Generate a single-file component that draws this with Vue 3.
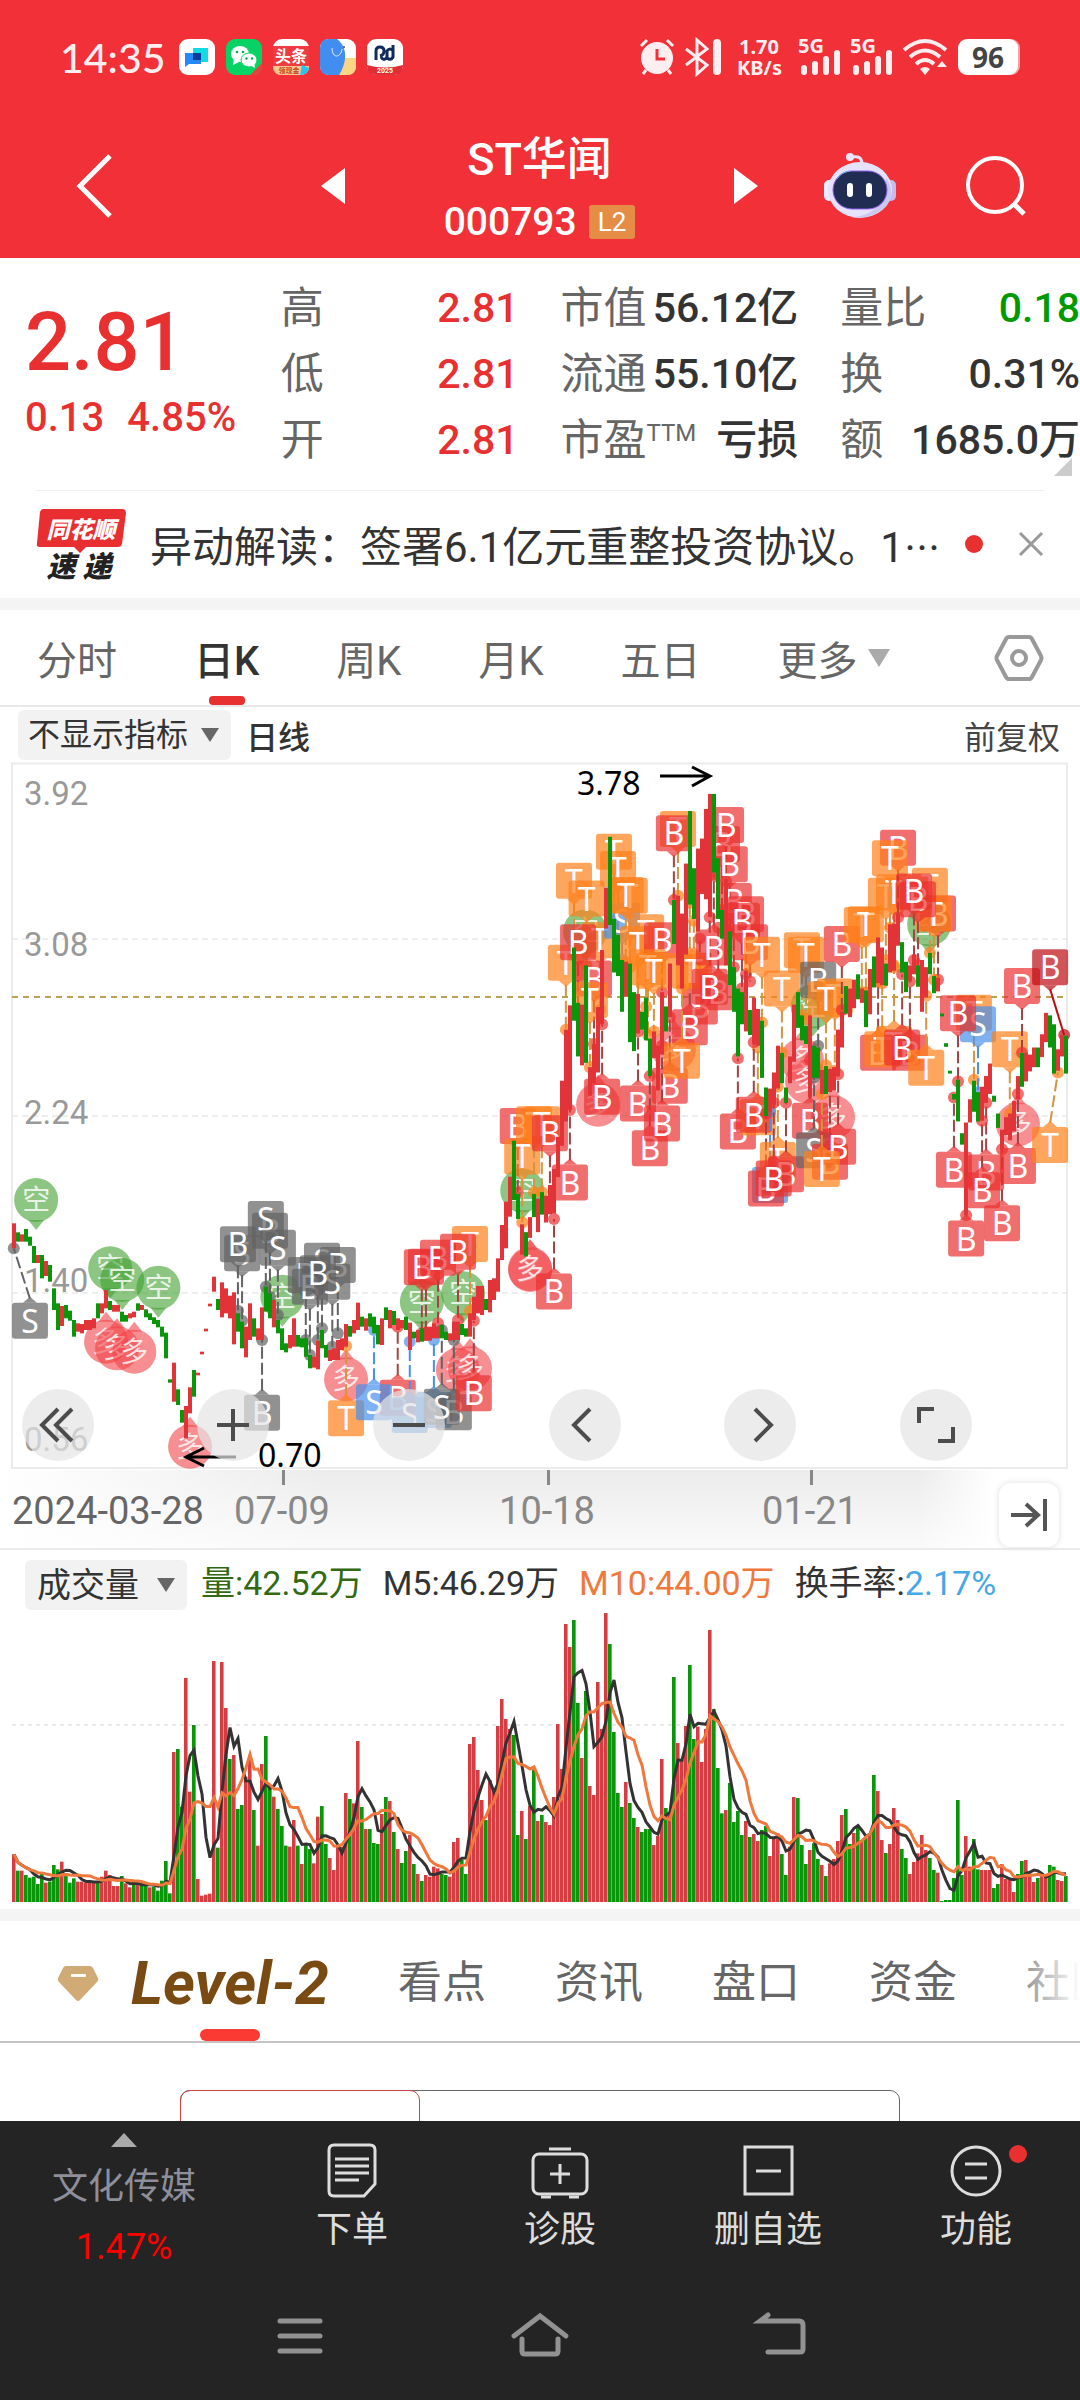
<script setup>
import { ref } from 'vue'

const quotes = [
    [
        { label: '高', value: '2.81', tone: 'up' },
        { label: '低', value: '2.81', tone: 'up' },
        { label: '开', value: '2.81', tone: 'up' }
    ],
    [
        { label: '市值', value: '56.12亿' },
        { label: '流通', value: '55.10亿' },
        { label: '市盈', sup: 'TTM', value: '亏损' }
    ],
    [
        { label: '量比', value: '0.18', tone: 'down' },
        { label: '换', value: '0.31%' },
        { label: '额', value: '1685.0万' }
    ]
]

const periods = ['分时', '日K', '周K', '月K', '五日']
const period = ref('日K')
const sections = ['看点', '资讯', '盘口', '资金', '社区']

// top-bottom of every candle, g marks a falling day
const firstHalf = `370-445 397-425g 403-425 387-425g 410-437g 438-489g 465-489 465-535g 483-528 495-545g
565-630g 610-690g 618-678 615-655g 632-662g 660-710g 670-695 672-700 660-690 660-690
655-685 610-655g 610-640 570-625 603-630g 615-635 615-635 635-665g 645-665g 640-655
635-652 610-632g 615-630 628-652g 640-660g 652-672g 660-682g 680-710g 698-775g 838-848g
788-905 868-915g 930-968g 918-1015 862-940 810-890g 818-826 755-763 686-694 611-619
530-575 597-630g 547-652 565-640 587-655 577-733 640-695g 665-745g 680-772 610-720
655-710g 685-720 622-720 560-635g 580-655g 600-682 660-700g 685-750g 730-757g 705-745
655-740 705-740g 715-742g 715-770g 765-805g 770-803 722-808 690-745g 735-773g 750-783
745-780 720-780 715-750 672-740 678-710g 660-700 608-690 650-680g 655-692 640-680g
650-700g 675-733g 655-735 622-660g 630-685 633-675g 655-690 660-685 650-690g 668-750
695-715g 690-727 685-725g 680-722 680-722 670-715 680-715 675-715g 695-720g 700-722
665-720 665-720 672-705g 685-710g 640-710 590-660 558-640 558-645 597-630g 540-637
535-600 475-575 375-480 305-445 230-350 122-300g`

const secondHalf = `1215-1285g 1300-1385 1322-1390g 1280-1338 1215-1280g 1228-1322 1210-1273g 1220-1295
1190-1272 1145-1270 1055-1168 898-1080 755-1012 687-980 525-730g 680-830g 685-855 575-848g
860-940 795-905 692-875 532-740 357-472 215-462g 445-595g 490-605g 560-705g 565-663
570-790g 650-815g 655-765 705-755g 665-785g 780-885g 760-835 800-925 650-825 690-760g
570-720 392-515g 380-575 430-640 290-545 143-405g 303-445g 248-480 220-375 137-390
95-440 95-315g 275-445g 420-500g 335-575 480-630g 580-705g 640-830g 650-740g 590-760
700-770g 665-795 697-800 730-890g 917-997g 920-985 875-965 800-920 820-905g 917-960g
830-905 685-845 650-750g 715-785g 745-795g 715-945 800-890g 805-890g 868-935 857-935g
865-930 860-925 755-885 705-805 633-710g 640-720 615-695 600-670g 640-680 645-748g
585-712 550-637g 497-625 525-630 570-632g 460-595 458-590 430-520 510-595g 565-650g
575-620 545-600 575-635g 560-705 580-665 540-600g 605-653g 610-648 710-718g 793-803g
870-878g 935-950g 895-1012g 1045-1077g 1015-1275 950-1015 898-985g 930-1012g 915-1010 885-960
850-935 940-957g 990-1030g 1035-1090 1000-1050 990-1065 955-1040 885-950 820-915g 820-900
825-872 805-860 805-860g 768-832 708-790 715-805g 740-878g 810-870 770-830 772-878g`

// the two halves are recorded at different resolutions
const early = { x: v => v / 2.904, y: v => 340 + v / 3 }
const late = { x: v => 500 + v / 2.703, y: v => v / 2.8 }

const readCandles = (text, scale, start) =>
    text.split(/\s+/).map((item, i) => {
        const [top, bottom] = item.split('-').map(v => scale.y(parseInt(v)))
        return { x: 12 + (start + i) * 4, y: top, height: bottom - top, fall: item.endsWith('g') }
    })

const candles = [
    ...readCandles(firstHalf, early, 0),
    ...readCandles(secondHalf, late, 126)
]

// kind letter x y anchorY [anchorX]
const earlyTags = `green 空 105 300|green 空 320 505|green 空 355 540|green 空 460 563|green 空 820 590
green 空 1225 605|green 空 1345 580|rose 多 308 725|rose 多 340 745|rose 多 390 755|rose 多 552 1040
rose 多 1005 838|rose 多 1330 810|rose 多 1365 805|rose 多 1540 510
gray S 87 662 445 40|gray S 703 460 662|gray B 691 433 632|gray B 784 392 590|gray S 772 357 560
gray S 807 443 645|gray B 761 938 720|gray S 935 482 685|gray B 888 525 720|gray B 900 560 765
gray B 981 495 700|gray S 965 545 740|gray B 923 520 720
orange T 1365 432 632|red B 1237 500 705|red B 1225 502 700|red B 1272 473 670|red B 1330 455 660
orange T 1005 955 738|red B 1155 893 680|blue S 1086 907 690|blue S 1190 945 725|blue S 1260 930 720
gray B 1318 937 720|gray S 1283 920 690|red B 1376 880 662`

const lateTags = `green 空 60 1205|green 空 230 480|green 空 845 690|green 空 1160 460
rose 多 81 1425|rose 多 265 965|rose 多 470 810|rose 多 816 840|rose 多 830 900|rose 多 900 1000|rose 多 1400 1020
red B 48 1025 1210|orange T 60 1110 1295|orange T 92 1020 1210|orange T 113 1020 1210|red B 135 1045 1240
red B 146 1488 1285|red B 189 1183 980|orange T 200 338 540|orange T 234 388 575|orange T 308 257 450
orange T 319 305 490|orange T 178 568 755|orange T 270 505 700|red B 211 510 700|red B 254 612 795
orange T 243 672 860|red B 276 943 740|blue S 330 450 560|orange T 351 380 580|orange T 340 378 565
orange T 395 482 690|orange T 373 515 715|red B 438 505 650|orange T 400 580 770|orange T 416 590 760
red B 373 962 760|red B 405 1087 885|red B 459 912 720|red B 438 1018 800|orange T 481 193 380
red B 470 205 392|red B 540 690 500|red B 513 748 560|orange T 492 842 640|orange T 513 590 400
orange T 524 590 450|red B 590 650 470|red B 567 635 440|red B 578 525 320|red B 600 235 420
red B 611 182 340|red B 621 292 480|red B 632 395 580|red B 665 432 600|red B 654 450 640|red B 676 510 620
red B 643 1040 835|orange T 697 1000 805|red B 686 993 790|orange T 708 545 735|orange T 762 640 820
orange T 816 533 715|orange T 827 545 725|blue S 730 1190 985|red B 719 1200 990|orange T 751 1120 915
red B 773 1160 960|red B 740 1172 960|gray B 860 615 800|orange T 905 662 870|orange T 881 670 855
red B 838 1010 840|gray S 849 1093 890|red B 892 1125 890|red B 914 1083 880|orange T 870 1145 935
red B 924 515 700|orange T 978 462 650|orange T 989 460 650|orange T 1043 380 560|orange T 1065 370 575
red B 1076 246 440|orange T 1054 275 470|orange T 1162 352 540|red B 1184 430 615|orange T 1173 430 615
red B 1130 390 575|red B 1119 368 560|red B 1022 820 620|orange T 1033 810 625|orange T 1065 795 580
red B 1108 820 620|red B 1087 805 600|orange T 1152 862 660|orange T 1281 708 895|blue S 1292 740 930
red B 1238 709 900|red B 1227 1147 945|red B 1260 1340 1275|red B 1314 1155 960|red B 1303 1205 1010
red B 1357 1297 1090|red B 1400 1137 935|orange T 1378 810 990|red B 1411 633 820
crimson B 1487 580 770 1525|orange T 1487 1078 875 1508`

const readTags = (text, scale) =>
    text.split(/[|\n]/).map(item => {
        const [kind, letter, x, y, anchorY, anchorX] = item.split(' ')
        const tag = { kind, letter, x: scale.x(+x), y: scale.y(+y), round: !anchorY }
        if (anchorY) {
            tag.anchorX = scale.x(+(anchorX || x))
            tag.anchorY = scale.y(+anchorY)
            tag.below = tag.anchorY < tag.y
        }
        return tag
    })

const tags = [...readTags(earlyTags, early), ...readTags(lateTags, late)]
const bubbles = tags.filter(tag => tag.round)
const trades = tags.filter(tag => !tag.round)

// bar tops counted from the top of the 905 unit high volume pane
const volumeText = `763 812g 812 825g 833g 830g 852g 822g 848 845g 795g 808g 785 820g 848g 835g 845 845 848 848
845 845g 830 812 825 858 858 828g 850 862 855g 855 850g 850g 862 860g 872g 842g 783g 880g
456 447g 620g 234 575 375g 837 887 884 881 183 743g 186 324 477g 465 627g 615g 530 480
630g 737 492 408g 560g 590 627g 678g 737g 740 660 737g 792 733g 747g 790 650 618g 732g 774
810 740 740 579 597g 610 423 621g 687 687g 729g 732g 642 591g 603 696g 747 789g 753g 705
792g 822 843g 825 830 800 805 822g 825g 830 726 714 780g 822g 432 411 510 600 660g 540
572 378 297 357 387 405g 705g 633 717g 618 510g 663 645g 666 675 591 372 507 72 141
60g 309g 474 273g 558 585 246 387 39 132g 396g 579g 621g 546 609g 654g 681 696g 687g 687g
735 708 477 624g 640 231g 429 480 378 195g 417g 380 486 387 90 327g 504g 640g 630 549g
666g 633g 705g 663 711g 702 723 690g 678g 768 710 700 762g 825g 740 591 594g 735g 792g 750
730g 777g 795 828g 790 777 723 645 627g 732g 699 680g 720 714g 700 525g 573 720 759g 732
624 660 747g 774g 822 786 760 705 750 774g 810g 818 903g 900g 900g 834g 600g 825g 708 800
717g 808g 810 810 810 864g 852g 792 837 840 876 822g 783g 780 820 846 834g 825 830 795g
800g 840 843 828g`

const volumes = volumeText.split(/\s+/).map((item, i) => ({
    x: 12 + i * 4,
    y: parseInt(item) / 3,
    fall: item.endsWith('g')
}))

const average = days =>
    volumes.map((bar, i) => {
        const slice = volumes.slice(Math.max(0, i - days + 1), i + 1)
        const mean = slice.reduce((sum, v) => sum + v.y, 0) / slice.length
        return `${bar.x + 2},${mean.toFixed(1)}`
    }).join(' ')

const ma5 = average(5)
const ma10 = average(10)
</script>

<template>
    <div class="page">
        <header class="header">
            <div class="status">
                <span class="clock">14:35</span>
                <svg class="app-icon" viewBox="0 0 36 36">
                    <rect width="36" height="36" rx="9" fill="#fff" />
                    <path d="M14 9h15v14H14z" fill="#13dbe4" />
                    <path d="M6 14h16v11H10l-4 3z" fill="#2787f5" />
                    <path d="M14 14h8v7h-8z" fill="#0a3d9a" />
                </svg>
                <svg class="app-icon" viewBox="0 0 36 36">
                    <rect width="36" height="36" rx="9" fill="#07d365" />
                    <path d="M36 24v3q0 9-9 9h-3z" fill="#e5443c" />
                    <ellipse cx="14" cy="15" rx="9" ry="8" fill="#fff" />
                    <path d="M8 20l-1 6 6-3z" fill="#fff" />
                    <ellipse cx="23" cy="21" rx="8" ry="7" fill="#fff" stroke="#07d365" />
                    <path d="M24 26l5 3-1-6z" fill="#fff" />
                    <g fill="#07a850">
                        <circle cx="11" cy="13" r="1.300" /><circle cx="17" cy="13" r="1.300" />
                        <circle cx="20.500" cy="19.500" r="1.200" /><circle cx="26" cy="19.500" r="1.200" />
                    </g>
                </svg>
                <svg class="app-icon" viewBox="0 0 36 36">
                    <rect width="36" height="36" rx="9" fill="#fff" />
                    <path d="M0 7h36v20H0z" fill="#ef3b3f" />
                    <path d="M0 27h36q0 9-9 9H9q-9 0-9-9z" fill="#fbc98e" />
                    <text x="18" y="23" class="icon-text" font-size="16" fill="#fff">头条</text>
                    <text x="16" y="34" class="icon-text" font-size="7" fill="#c34422">领现金</text>
                    <path d="M29 26l7 3q-1 7-9 7z" fill="#2ac2f0" />
                </svg>
                <svg class="app-icon" viewBox="0 0 36 36">
                    <rect width="36" height="36" rx="9" fill="#fff" />
                    <path d="M20 19h16v8q0 9-9 9H16z" fill="#f9d584" />
                    <path d="M9 0h8c12 9 9 25 2 36H9q-9 0-9-9V9q0-9 9-9z" fill="#428ef0" />
                    <path d="M12 9c0 11 9 10 10 1" fill="none" stroke="#e7f1ff" />
                    <circle cx="24" cy="8" r="1" fill="#555" />
                </svg>
                <svg class="app-icon" viewBox="0 0 36 36">
                    <rect width="36" height="36" rx="9" fill="#fff" />
                    <path d="M0 26q18 5 36 0v1q0 9-9 9H9q-9 0-9-9z" fill="#e12e35" />
                    <path d="M9 21v-9q0-4 4-4t4 4-4 5M14 18q3 5 6 0v-6q3-4 6 0m0-6v12q-2 4-6 1" fill="none" stroke="#102a5e" stroke-width="3" />
                    <text x="18" y="34" class="icon-text" font-size="7" fill="#fff">2025</text>
                </svg>
                <span class="spacer"></span>
                <svg class="sys" width="36" height="38" viewBox="0 0 36 38">
                    <circle cx="18" cy="20" r="16" fill="#ffeef0" />
                    <path d="M2 8l6-6M34 8l-6-6M7 32l-3 4M29 32l3 4" stroke="#ffeef0" stroke-width="3" />
                    <path d="M18 11v10h8" fill="none" stroke="#f13039" stroke-width="3" />
                </svg>
                <svg class="sys" width="36" height="38" viewBox="0 0 36 38">
                    <path d="M1 11l21 16-10 9V2l10 9L1 27" fill="none" stroke="#ffeef0" stroke-width="3" />
                    <path d="M32 5v28" stroke="#ffeef0" stroke-width="8" stroke-linecap="round" />
                </svg>
                <span class="speed">1.70<br>KB/s</span>
                <svg v-for="n in 2" :key="n" class="sys" width="42" height="38" viewBox="0 0 42 38">
                    <text x="0" y="15" class="sys-text">5G</text>
                    <path d="M6 30v4M17 26v8M28 21v13M39 15v19" stroke="#ffeef0" stroke-width="6" stroke-linecap="round" />
                </svg>
                <svg class="sys" width="46" height="38" viewBox="0 0 46 38">
                    <path d="M2 12Q23-6 44 12M8 19q15-13 30 0M14 26q9-8 18 0" fill="none" stroke="#ffeef0" stroke-width="4" />
                    <path d="M18 31q5-4 10 0l-5 6zM35 29h10l-5-6z" fill="#ffeef0" />
                </svg>
                <span class="battery">96</span>
            </div>
            <div class="nav">
                <button class="plain back" aria-label="返回">
                    <svg width="40" height="66" viewBox="0 0 40 66"><path d="M35 3L5 33l30 30" fill="none" stroke="#fff" stroke-width="5" /></svg>
                </button>
                <button class="plain" aria-label="上一只">
                    <svg width="24" height="36" viewBox="0 0 24 36"><path d="M24 0v36L0 18z" fill="#fff" /></svg>
                </button>
                <div class="stock">
                    <h1>ST华闻</h1>
                    <p>000793 <span>L2</span></p>
                </div>
                <button class="plain" aria-label="下一只">
                    <svg width="24" height="36" viewBox="0 0 24 36"><path d="M0 0v36l24-18z" fill="#fff" /></svg>
                </button>
                <button class="plain robot" aria-label="问财">
                    <svg width="72" height="68" viewBox="0 0 72 68">
                        <path d="M28 5q10-2 10 7" fill="none" stroke="#e6e0fa" stroke-width="3" />
                        <circle cx="26" cy="5" r="4" fill="#ece6fb" />
                        <rect x="0" y="28" width="10" height="21" rx="5" fill="#eceafc" />
                        <rect x="62" y="28" width="10" height="21" rx="5" fill="#c5bcec" />
                        <ellipse cx="36" cy="38" rx="32" ry="28" fill="#e6e2fb" />
                        <path d="M62 25q14 23-9 36Q42 67 27 65q23 0 32-20z" fill="#ccc7f1" />
                        <rect x="9" y="19" width="54" height="38" rx="19" fill="#202c52" stroke="#8b5ef0" stroke-width="1" />
                        <path d="M13 27q4-7 13-8" fill="none" stroke="#5ab6e6" />
                        <rect x="23" y="31" width="6" height="14" rx="3" fill="#fff" />
                        <rect x="42" y="31" width="6" height="14" rx="3" fill="#fff" />
                    </svg>
                </button>
                <button class="plain search" aria-label="搜索">
                    <svg width="60" height="60" viewBox="0 0 60 60">
                        <circle cx="29" cy="29" r="27" fill="none" stroke="#fff" stroke-width="4" />
                        <path d="M48 48l10 10" stroke="#fff" stroke-width="5" />
                    </svg>
                </button>
            </div>
        </header>

        <section class="quote">
            <div class="price">
                <strong>2.81</strong>
                <span>0.13</span><span>4.85%</span>
            </div>
            <dl v-for="(column, i) in quotes" :key="i">
                <div v-for="item in column" :key="item.label">
                    <dt>{{ item.label }}<sup v-if="item.sup">{{ item.sup }}</sup></dt>
                    <dd :class="item.tone">{{ item.value }}</dd>
                </div>
            </dl>
            <i class="corner"></i>
        </section>

        <section class="news">
            <svg width="92" height="74" viewBox="0 0 92 74">
                <path d="M7 2h79q4 0 4 4l-4 31q-1 3-4 3H50l-6 6-6-6H4q-4 0-3-4L4 5q1-3 3-3z" fill="#e92e31" />
                <text x="45" y="31" class="logo-text" font-size="23" fill="#fff">同花顺</text>
                <text x="43" y="70" class="logo-text" font-size="29" fill="#222">速 递</text>
            </svg>
            <a href="#">异动解读：签署6.1亿元重整投资协议。1<span>⋯</span></a>
            <i></i>
            <button class="plain" aria-label="关闭">
                <svg width="26" height="26" viewBox="0 0 26 26"><path d="M2 2l22 22M24 2L2 24" stroke="#999" stroke-width="3" /></svg>
            </button>
        </section>

        <nav class="periods">
            <button
                v-for="name in periods"
                :key="name"
                class="plain"
                :class="{ active: name === period }"
                @click="period = name"
            >{{ name }}</button>
            <button class="plain more">更多<svg width="24" height="18" viewBox="0 0 24 18"><path d="M1 0h22L12 18z" fill="#aaa" /></svg></button>
            <button class="plain setting" aria-label="设置">
                <svg width="50" height="46" viewBox="0 0 50 46">
                    <path d="M15 2h20q2 0 3 2l9 17q1 2 0 4l-9 17q-1 2-3 2H15q-2 0-3-2L3 25q-1-2 0-4l9-17q1-2 3-2z" fill="none" stroke="#999" stroke-width="4" />
                    <circle cx="25" cy="23" r="7" fill="none" stroke="#999" stroke-width="4" />
                </svg>
            </button>
        </nav>

        <div class="toolbar">
            <label class="picker">
                <select aria-label="指标"><option>不显示指标</option></select>
                <svg width="20" height="14" viewBox="0 0 20 14"><path d="M1 0h18l-9 14z" fill="#666" /></svg>
            </label>
            <strong>日线</strong>
            <span>前复权</span>
        </div>

        <section class="kline">
            <svg class="chart" viewBox="0 0 1080 710">
                <path d="M12 3.500H1067V708H12z" fill="none" stroke="#ebebeb" stroke-width="2" />
                <path d="M12 179H1067M12 356H1067M12 533H1067" stroke="#ddd" stroke-dasharray="6 4" />
                <path d="M12 237H1067" stroke="#bba055" stroke-width="2" stroke-dasharray="6 5" />
                <g class="scale">
                    <text x="24" y="45">3.92</text>
                    <text x="24" y="196">3.08</text>
                    <text x="24" y="364">2.24</text>
                    <text x="24" y="532">1.40</text>
                    <text x="24" y="691">0.56</text>
                </g>
                <g v-for="(tag, i) in bubbles" :key="'b' + i" :class="tag.kind" class="bubble">
                    <circle :cx="tag.x" :cy="tag.y" r="22" />
                    <path v-if="tag.kind === 'green'" :d="`M${tag.x - 8} ${tag.y + 20}h16l-8 10z`" />
                    <path v-else :d="`M${tag.x - 8} ${tag.y - 20}h16l-8 -10z`" />
                    <text :x="tag.x" :y="tag.y + 10">{{ tag.letter }}</text>
                </g>
                <g v-for="(tag, i) in trades" :key="'t' + i" :class="tag.kind" class="trade">
                    <line :x1="tag.x" :y1="tag.y + (tag.below ? -22 : 22)" :x2="tag.anchorX" :y2="tag.anchorY" />
                    <circle :cx="tag.anchorX" :cy="tag.anchorY" r="6" />
                    <path v-if="tag.below" :d="`M${tag.x - 7} ${tag.y - 18}h14l-7 -6z`" />
                    <path v-else :d="`M${tag.x - 7} ${tag.y + 18}h14l-7 6z`" />
                    <rect :x="tag.x - 18" :y="tag.y - 18" width="36" height="36" rx="3" />
                    <text :x="tag.x" :y="tag.y + 12">{{ tag.letter }}</text>
                </g>
                <rect
                    v-for="(bar, i) in candles"
                    :key="'c' + i"
                    :x="bar.x"
                    :y="bar.y"
                    width="4"
                    :height="bar.height"
                    :fill="bar.fall ? '#0a960a' : '#e23338'"
                />
                <g fill="none" stroke="#000" stroke-width="3">
                    <path d="M660 16h50M692 7l18 9-18 10" />
                    <path d="M236 697h-50M204 688l-18 9 18 9" />
                </g>
                <g class="extreme">
                    <text x="577" y="35">3.78</text>
                    <text x="258" y="707">0.70</text>
                </g>
            </svg>
            <div class="controls">
                <button aria-label="最早"><svg viewBox="0 0 72 72"><path d="M36 20L20 36l16 16M50 20L34 36l16 16" /></svg></button>
                <button aria-label="放大"><svg viewBox="0 0 72 72"><path d="M36 20v32M20 36h32" /></svg></button>
                <button aria-label="缩小"><svg viewBox="0 0 72 72"><path d="M20 36h32" /></svg></button>
                <button aria-label="左移"><svg viewBox="0 0 72 72"><path d="M41 20L25 36l16 16" /></svg></button>
                <button aria-label="右移"><svg viewBox="0 0 72 72"><path d="M31 20l16 16-16 16" /></svg></button>
                <button aria-label="全屏"><svg viewBox="0 0 72 72"><path d="M19 34V20h15M38 52h15V38" /></svg></button>
            </div>
        </section>

        <div class="axis">
            <span class="first">2024-03-28</span>
            <span class="mark">07-09</span>
            <span class="mark">10-18</span>
            <span class="mark">01-21</span>
            <button class="plain" aria-label="最新">
                <svg width="38" height="34" viewBox="0 0 38 34"><path d="M1 17h26M16 6l12 11-12 11M35 1v32" fill="none" stroke="#555" stroke-width="4" /></svg>
            </button>
        </div>

        <section class="volume">
            <div class="legend">
                <label class="picker">
                    <select aria-label="副图"><option>成交量</option></select>
                    <svg width="20" height="14" viewBox="0 0 20 14"><path d="M1 0h18l-9 14z" fill="#666" /></svg>
                </label>
                <span class="total">量:42.52万</span>
                <span>M5:46.29万</span>
                <span class="ten">M10:44.00万</span>
                <span>换手率:<b>2.17%</b></span>
            </div>
            <svg class="chart" viewBox="0 10 1080 292">
                <path d="M12 125H1067" stroke="#e8e8e8" stroke-width="2" stroke-dasharray="4 4" />
                <g v-for="(bar, i) in volumes" :key="i">
                    <rect :x="bar.x" :y="bar.y" width="3" :height="302 - bar.y" :fill="bar.fall ? '#0a960a' : '#d63d42'" />
                    <rect :x="bar.x + 3" :y="bar.y" width="1" :height="302 - bar.y" :fill="bar.fall ? '#55c255' : '#f08a8c'" />
                </g>
                <polyline :points="ma5" fill="none" stroke="#333" stroke-width="3" />
                <polyline :points="ma10" fill="none" stroke="#f0783c" stroke-width="3" />
            </svg>
        </section>

        <nav class="sections">
            <svg width="42" height="37" viewBox="0 0 42 37">
                <path d="M9 1h24q2 0 3 2l5 10q1 2-1 4L23 35q-2 2-4 0L2 17q-2-2-1-4L6 3q1-2 3-2z" fill="#d1ab76" />
                <rect x="14" y="9" width="15" height="3" rx="1" fill="#fff" />
            </svg>
            <a href="#" class="level">Level-2</a>
            <a v-for="name in sections" :key="name" href="#">{{ name }}</a>
        </nav>

        <section class="teaser">
            <div><span></span></div>
        </section>

        <footer class="footer">
            <div class="actions">
                <a href="#" class="sector">
                    <svg width="26" height="14" viewBox="0 0 26 14"><path d="M0 14h26L13 0z" fill="#aaa" /></svg>
                    <span>文化传媒</span>
                    <b>1.47%</b>
                </a>
                <button class="plain">
                    <svg width="60" height="58" viewBox="0 0 60 58">
                        <path d="M12 4h36q5 0 5 5v34l-11 12H12q-5 0-5-5V9q0-5 5-5z" />
                        <path d="M13 18h34M13 25h34M13 32h34M13 39h24" />
                    </svg>
                    下单
                </button>
                <button class="plain">
                    <svg width="60" height="58" viewBox="0 0 60 58">
                        <rect x="3" y="13" width="54" height="40" rx="6" />
                        <path d="M19 8h22M30 23v20M20 33h20M11 56h10M39 56h10" />
                    </svg>
                    诊股
                </button>
                <button class="plain">
                    <svg width="60" height="58" viewBox="0 0 60 58">
                        <rect x="7" y="6" width="47" height="47" />
                        <path d="M18 30h25" />
                    </svg>
                    删自选
                </button>
                <button class="plain">
                    <svg width="60" height="58" viewBox="0 0 60 58">
                        <circle cx="30" cy="30" r="24" />
                        <path d="M19 23h22M19 37h22" />
                    </svg>
                    <i></i>
                    功能
                </button>
            </div>
            <div class="system">
                <button class="plain" aria-label="任务">
                    <svg width="60" height="48" viewBox="0 0 60 48"><path d="M10 8h40M10 23h40M10 38h40" /></svg>
                </button>
                <button class="plain" aria-label="主页">
                    <svg width="60" height="48" viewBox="0 0 60 48"><path d="M4 23L30 3l26 20M12 26v12q0 3 3 3h30q3 0 3-3V26" /></svg>
                </button>
                <button class="plain" aria-label="返回上级">
                    <svg width="60" height="48" viewBox="0 0 60 48"><path d="M18 2l-8 6h39q4 0 4 4v24q0 3-3 3H18" /></svg>
                </button>
            </div>
        </footer>
    </div>
</template>

<style>
body {
    background: #242424;
}
</style>

<style scoped>
.page {
    font-family: Roboto, "Noto Sans CJK SC", sans-serif;
    background: white;
    color: #333;
    overflow: hidden;
}

.page * {
    box-sizing: border-box;
}

svg {
    display: block;
    flex: none;
    overflow: visible;
}

.plain {
    padding: 0;
    border: 0;
    background: none;
    font: inherit;
    color: inherit;
}

a {
    color: inherit;
    text-decoration: none;
}

.header {
    height: 258px;
    background: #f13038;
    color: white;
}

.status {
    display: flex;
    align-items: center;
    height: 114px;
    padding: 0 62px 0 60px;
}

.clock {
    width: 119px;
    font: 500 41px Lato, sans-serif;
    color: #ffeef0;
}

.app-icon {
    width: 36px;
    height: 36px;
    margin-right: 11px;
}

.icon-text {
    text-anchor: middle;
    font-weight: 700;
}

.spacer {
    flex: 1;
}

.sys {
    margin-right: 10px;
}

.sys-text {
    font: 700 20px "Noto Sans", sans-serif;
    fill: #ffeef0;
}

.speed {
    width: 44px;
    margin: 0 17px 0 6px;
    font: 700 20px/21px "Noto Sans", sans-serif;
    text-align: center;
    color: #ffeef0;
}

.battery {
    width: 60px;
    height: 36px;
    border-radius: 9px;
    background: white;
    font: 700 28px/36px "Noto Sans", sans-serif;
    text-align: center;
    color: #444;
    box-shadow: 2px 0 0 #f9a3a7;
}

.nav {
    display: flex;
    align-items: center;
    height: 144px;
    padding: 0 54px 0 75px;
}

.back {
    margin-right: 206px;
}

.stock {
    flex: 1;
    padding-top: 8px;
    text-align: center;
}

.stock h1 {
    margin: 0;
    font-size: 45px;
    line-height: 64px;
    font-weight: 500;
}

.stock p {
    display: flex;
    justify-content: center;
    align-items: center;
    gap: 12px;
    margin: 0;
    font-size: 39px;
    line-height: 60px;
    font-weight: 500;
}

.stock span {
    padding: 0 9px;
    border-radius: 3px;
    background: #e58d47;
    font-size: 26px;
    line-height: 34px;
    font-weight: 400;
}

.robot {
    margin-left: 66px;
}

.search {
    margin-left: 70px;
}

.quote {
    position: relative;
    display: grid;
    grid-template-columns: minmax(0, 214fr) minmax(0, 238fr) minmax(0, 238fr) minmax(0, 240fr);
    column-gap: 42px;
    height: 232px;
    padding: 17px 0 0 25px;
}

.price {
    padding-top: 19px;
    white-space: nowrap;
    color: #e93030;
    font-size: 40px;
    font-weight: 500;
}

.price strong {
    display: block;
    font-size: 81px;
    line-height: 98px;
    font-weight: 500;
}

.price span {
    margin-right: 23px;
    line-height: 52px;
}

.quote dl {
    margin: 0;
}

.quote dl div {
    display: flex;
    justify-content: space-between;
    height: 66px;
    line-height: 66px;
    white-space: nowrap;
}

.quote dt {
    font-size: 43px;
    color: #666;
}

.quote sup {
    font-size: 24px;
    line-height: 24px;
    vertical-align: 14px;
}

.quote dd {
    margin: 0;
    font-size: 41px;
    font-weight: 500;
}

.up {
    color: #e93030;
}

.down {
    color: #009900;
}

.corner {
    position: absolute;
    right: 8px;
    bottom: 14px;
    border: 9px solid;
    border-color: transparent #ccc #ccc transparent;
}

.news {
    display: flex;
    align-items: center;
    height: 120px;
    margin: 0 36px;
    border-top: 1px solid #eee;
    padding-bottom: 14px;
    position: relative;
}

.news::after {
    content: "";
    position: absolute;
    left: -36px;
    right: -36px;
    bottom: 0;
    height: 12px;
    background: #f4f4f4;
}

.logo-text {
    text-anchor: middle;
    font-weight: 900;
    font-style: italic;
}

.news a {
    flex: 1;
    margin-left: 22px;
    font-size: 42px;
    white-space: nowrap;
}

.news a span {
    font-family: "Noto Sans CJK SC", sans-serif;
    font-size: 36px;
}

.news i {
    width: 18px;
    height: 18px;
    margin-right: 35px;
    border-radius: 50%;
    background: #e93030;
}

.periods {
    display: flex;
    align-items: center;
    gap: 77px;
    height: 97px;
    padding: 0 36px 0 37px;
    border-bottom: 2px solid #e8e8e8;
    font-size: 40px;
    color: #666;
}

.periods button {
    position: relative;
    height: 95px;
}

.periods .active {
    color: #333;
    font-weight: 500;
}

.active::after {
    content: "";
    position: absolute;
    left: 50%;
    bottom: 0;
    width: 36px;
    height: 9px;
    margin-left: -18px;
    border-radius: 4px;
    background: #e93030;
}

.more {
    display: flex;
    align-items: center;
    gap: 9px;
}

.periods .setting {
    margin-left: auto;
}

.toolbar {
    display: flex;
    align-items: center;
    height: 53px;
    padding: 3px 20px 0 18px;
    font-size: 32px;
}

.toolbar strong {
    margin-left: 15px;
    font-weight: 500;
}

.toolbar span {
    margin-left: auto;
    color: #444;
}

.picker {
    position: relative;
    display: flex;
    align-items: center;
    border-radius: 6px;
    background: #f2f2f2;
}

.picker select {
    height: 50px;
    padding: 0 42px 0 10px;
    border: 0;
    appearance: none;
    background: none;
    font: inherit;
    color: inherit;
}

.picker svg {
    position: absolute;
    right: 11px;
    pointer-events: none;
}

.kline {
    position: relative;
}

.chart {
    width: 100%;
    height: auto;
}

.scale {
    font-size: 33px;
    fill: #999;
}

.extreme {
    font: 32px "Noto Sans", sans-serif;
    fill: #000;
}

.bubble circle,
.bubble path {
    fill: currentColor;
    opacity: 0.6;
}

.bubble text {
    font-size: 28px;
    text-anchor: middle;
    fill: white;
    opacity: 0.8;
}

.trade line {
    stroke: currentColor;
    stroke-width: 2;
    stroke-dasharray: 12 4;
}

.trade circle,
.trade path,
.trade rect {
    fill: currentColor;
    opacity: 0.7;
}

.trade text {
    font: 32px "Noto Sans", sans-serif;
    text-anchor: middle;
    fill: white;
}

.red {
    color: #e9302f;
}

.red line {
    stroke: #a34444;
}

.orange {
    color: #ff8019;
}

.orange line {
    stroke: #d59440;
}

.gray {
    color: #636363;
}

.blue {
    color: #4690ed;
}

.crimson {
    color: #bd0c12;
}

.crimson line {
    stroke-dasharray: none;
}

.green {
    color: #3fa02f;
}

.rose {
    color: #f14348;
}

.controls {
    position: absolute;
    left: 2%;
    right: 10%;
    bottom: 9px;
    display: flex;
    justify-content: space-between;
}

.controls button {
    width: 72px;
    height: 72px;
    padding: 0;
    border: 0;
    border-radius: 50%;
    background: rgba(228, 228, 228, 0.7);
}

.controls path {
    fill: none;
    stroke: #4c4c4c;
    stroke-width: 4;
}

.axis {
    display: grid;
    grid-template-columns: minmax(0, 200fr) minmax(0, 164fr) minmax(0, 366fr) minmax(0, 160fr) minmax(0, 190fr);
    height: 78px;
    background: linear-gradient(90deg, white, transparent 30%, transparent 85%, white 92%), linear-gradient(#ececec, #fafafa);
    font-size: 38px;
    line-height: 82px;
    color: #888;
}

.axis .first {
    padding-left: 12px;
    color: #666;
    white-space: nowrap;
}

.mark {
    position: relative;
    text-align: center;
}

.mark::before {
    content: "";
    position: absolute;
    left: 50%;
    top: 0;
    width: 3px;
    height: 15px;
    background: #888;
}

.axis button {
    display: flex;
    align-items: center;
    justify-content: center;
    justify-self: end;
    width: 60px;
    height: 64px;
    margin: 13px 21px 0 0;
    border-radius: 12px;
    background: white;
    box-shadow: 0 0 6px #ddd;
}

.volume {
    padding: 10px 0 7px;
    border-top: 2px solid #ebebeb;
    border-bottom: 12px solid #f4f4f4;
}

.legend {
    display: flex;
    align-items: center;
    gap: 20px;
    height: 50px;
    padding-left: 25px;
    font-size: 34px;
    line-height: 46px;
    white-space: nowrap;
}

.legend .picker {
    margin-right: -6px;
}

.legend select {
    padding: 0 48px 0 12px;
}

.legend span {
    height: 50px;
}

.legend .total {
    color: #326912;
}

.legend .ten {
    color: #f0783c;
}

.legend b {
    color: #45a7e6;
    font-weight: 400;
}

.sections {
    position: relative;
    display: flex;
    align-items: center;
    gap: 69px;
    height: 122px;
    padding: 4px 0 0 57px;
    border-bottom: 2px solid #c4c4c4;
    overflow: hidden;
    font-size: 44px;
    line-height: 116px;
    white-space: nowrap;
    color: #666;
}

.sections::after {
    content: "";
    position: absolute;
    right: 0;
    top: 0;
    width: 80px;
    height: 118px;
    background: linear-gradient(90deg, transparent, white);
}

.sections .level {
    position: relative;
    margin-left: -37px;
    font-size: 61px;
    font-weight: 700;
    font-style: italic;
    color: #794b12;
}

.level::after {
    content: "";
    position: absolute;
    left: 50%;
    bottom: 0;
    width: 60px;
    height: 12px;
    margin-left: -30px;
    border-radius: 6px;
    background: #fb3b33;
}

.teaser {
    height: 78px;
    padding: 47px 180px 0;
    overflow: hidden;
}

.teaser div {
    height: 60px;
    border: 1px solid #666;
    border-radius: 10px;
}

.teaser span {
    display: block;
    width: calc(100% / 3 + 1px);
    height: 60px;
    margin: -1px;
    border: 1px solid #c44;
    border-radius: 10px;
}

.footer {
    height: 279px;
    background: #242424;
    color: #ddd;
    font-size: 36px;
}

.actions {
    display: grid;
    grid-template-columns: 248fr 208fr 208fr 208fr 208fr;
    height: 150px;
    text-align: center;
}

.actions button {
    position: relative;
    display: flex;
    flex-direction: column;
    align-items: center;
    padding-top: 20px;
    line-height: 63px;
}

.actions button svg {
    fill: none;
    stroke: #ddd;
    stroke-width: 3;
}

.actions i {
    position: absolute;
    top: 24px;
    left: 50%;
    width: 18px;
    height: 18px;
    margin-left: 33px;
    border-radius: 50%;
    background: #e93030;
}

.sector {
    display: flex;
    flex-direction: column;
    align-items: center;
    padding-top: 12px;
    line-height: 60px;
    color: #8f8f9b;
}

.sector span {
    margin-top: 10px;
}

.sector b {
    font-weight: 400;
    color: #f00;
}

.system {
    display: flex;
    justify-content: center;
    gap: 180px;
    padding-top: 42px;
}

.system svg {
    fill: none;
    stroke: #929292;
    stroke-width: 5;
    stroke-linecap: round;
}
</style>
